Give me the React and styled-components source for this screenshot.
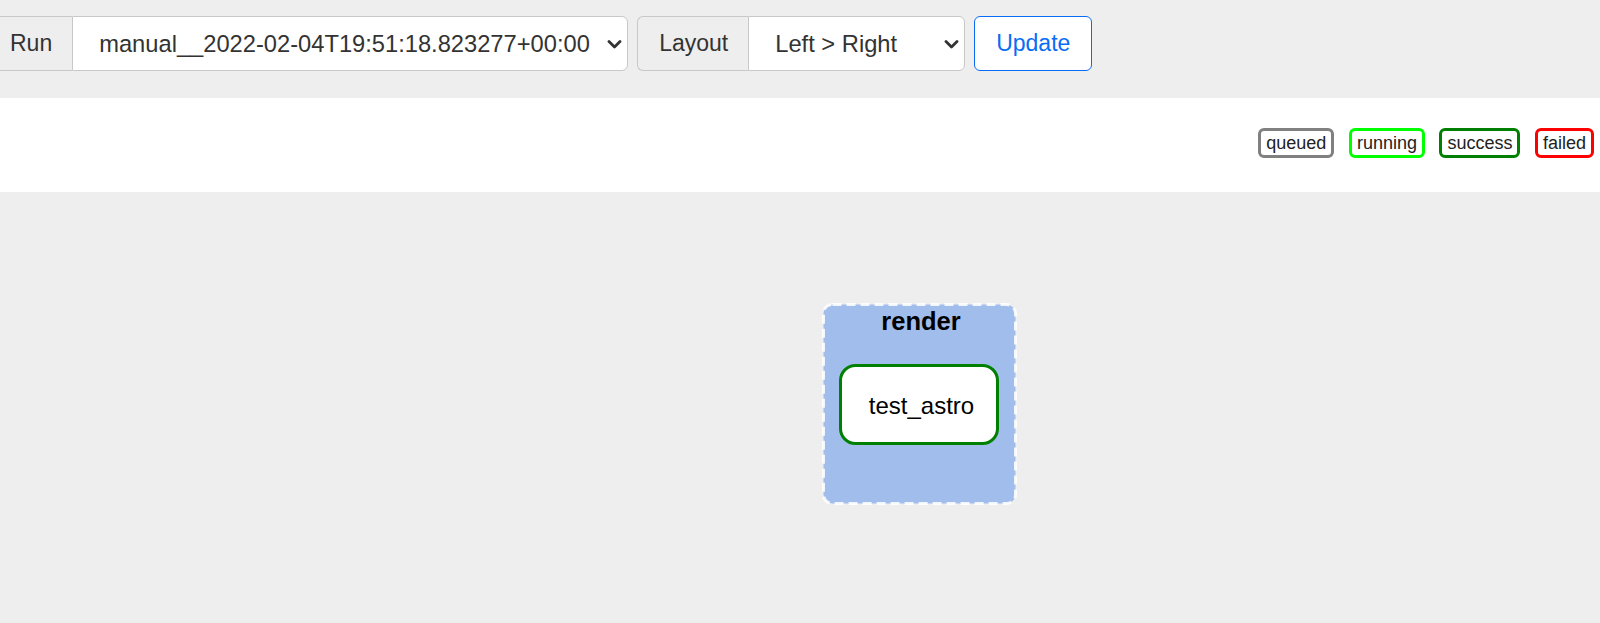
import styled, { createGlobalStyle } from 'styled-components';

const GlobalStyle = createGlobalStyle`
    html, body {
        margin: 0;
        padding: 0;
        background: #eeeeee;
        font-family: "Liberation Sans", Arial, Helvetica, sans-serif;
        overflow: hidden;
    }
`

const Page = styled.div`
    width: 1600px;
    height: 623px;
    display: flex;
    flex-direction: column;
`

const Toolbar = styled.form`
    display: flex;
    gap: 9px;
    margin: 16px 0 0 -12px;
    height: 55px;
`

const InputGroup = styled.div`
    display: flex;
    height: 100%;
`

const Addon = styled.span`
    display: flex;
    align-items: center;
    padding: 0 20px 0 21px;
    background: #eeeeee;
    color: #333;
    font-size: 23px;
    border: 1px solid #c8c8c8;
    border-right: 0;
    border-radius: 6px 0 0 6px;
`

const SelectWrap = styled.div`
    position: relative;
    width: ${props => props.width}px;
    height: 100%;
`

const Select = styled.select`
    appearance: none;
    -webkit-appearance: none;
    box-sizing: border-box;
    width: 100%;
    height: 100%;
    margin: 0;
    padding: 0 30px 0 26px;
    background: #fff;
    color: #333;
    font-family: inherit;
    font-size: 23.7px;
    border: 1px solid #c8c8c8;
    border-radius: 0 6px 6px 0;
    outline: none;
`

const Chevron = styled.svg`
    position: absolute;
    right: 6px;
    top: 50%;
    margin-top: -4px;
    width: 15px;
    height: 9px;
    pointer-events: none;
`

const UpdateButton = styled.button`
    box-sizing: border-box;
    width: 118px;
    height: 100%;
    background: #fff;
    color: #0a6cf5;
    font-family: inherit;
    font-size: 23px;
    border: 1px solid #0a6cf5;
    border-radius: 6px;
    cursor: pointer;
`

const LegendBand = styled.div`
    margin-top: 27px;
    height: 94px;
    background: #fff;
    display: flex;
    justify-content: flex-end;
    align-items: flex-start;
    gap: 14.5px;
    padding: 30px 6px 0 0;
    box-sizing: border-box;
`

const LegendItem = styled.span`
    box-sizing: border-box;
    height: 30px;
    display: flex;
    align-items: center;
    padding: 0 5px;
    font-size: 18px;
    color: #222;
    background: #fff;
    border: 3px solid ${props => props.color};
    border-radius: 6px;
`

const Canvas = styled.div`
    position: relative;
    flex: 1;
`

const Graph = styled.svg`
    display: block;
    width: 1600px;
    height: 431px;
    font-family: "Liberation Sans", Arial, Helvetica, sans-serif;
`

const ChevronIcon = () => (
    <Chevron viewBox="0 0 15 9">
        <polyline points="2,1.5 7.5,7 13,1.5" fill="none" stroke="#333" strokeWidth="2.8" strokeLinecap="round" strokeLinejoin="round" />
    </Chevron>
)

const states = [
    { name: 'queued', color: '#808080' },
    { name: 'running', color: '#00ff00' },
    { name: 'success', color: '#008000' },
    { name: 'failed', color: '#ff0000' },
]

const App = () => {
    return (
        <Page>
            <GlobalStyle />
            <Toolbar onSubmit={e => e.preventDefault()}>
                <InputGroup>
                    <Addon>Run</Addon>
                    <SelectWrap width={556}>
                        <Select defaultValue="manual__2022-02-04T19:51:18.823277+00:00">
                            <option>manual__2022-02-04T19:51:18.823277+00:00</option>
                        </Select>
                        <ChevronIcon />
                    </SelectWrap>
                </InputGroup>
                <InputGroup>
                    <Addon>Layout</Addon>
                    <SelectWrap width={217}>
                        <Select defaultValue="LR">
                            <option value="LR">Left &gt; Right</option>
                            <option value="TB">Top &gt; Bottom</option>
                        </Select>
                        <ChevronIcon />
                    </SelectWrap>
                </InputGroup>
                <UpdateButton type="submit">Update</UpdateButton>
            </Toolbar>

            <LegendBand>
                {states.map(s => (
                    <LegendItem key={s.name} color={s.color}>{s.name}</LegendItem>
                ))}
            </LegendBand>

            <Canvas>
                <Graph viewBox="0 0 1600 431">
                    {/* task group: render */}
                    <rect x="823.5" y="112.5" width="192" height="199" rx="9" ry="9"
                        fill="#a1bdec" stroke="#ffffff" strokeOpacity="0.85" strokeWidth="3" strokeDasharray="9 5" />
                    <text x="921" y="138" textAnchor="middle" fontSize="25.5" fontWeight="bold" fill="#000">render</text>

                    {/* task: test_astro */}
                    <rect x="840.5" y="173.5" width="157" height="78" rx="15" ry="15"
                        fill="#ffffff" stroke="#008000" strokeWidth="3" />
                    <text x="921.5" y="222" textAnchor="middle" fontSize="24" fill="#000">test_astro</text>
                </Graph>
            </Canvas>
        </Page>
    )
}

export default App;
